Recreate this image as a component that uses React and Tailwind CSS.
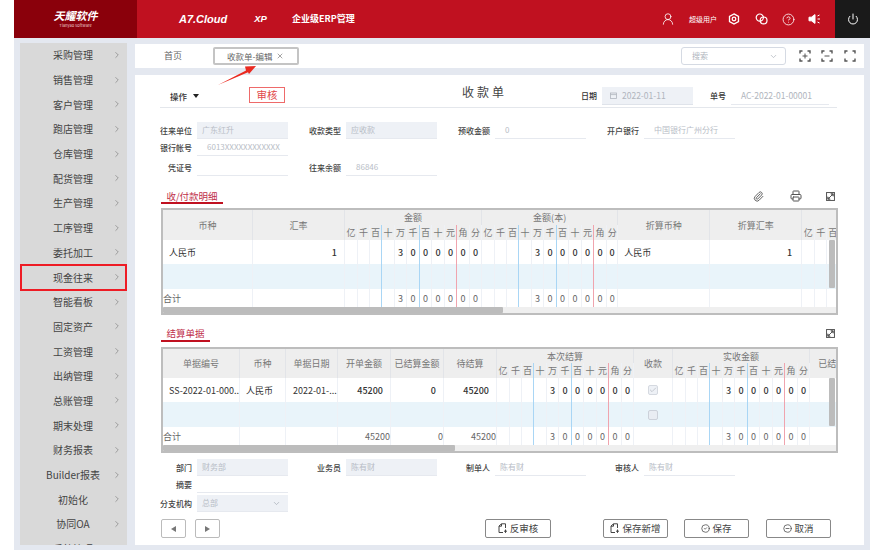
import React from "react";
import { ChevronRight, ChevronDown, X, Power, UserRound, CircleHelp, CircleCheck, CircleMinus, Paperclip, Printer, Check } from "lucide-react";

const menu = ["采购管理","销售管理","客户管理","跑店管理","仓库管理","配货管理","生产管理","工序管理","委托加工","现金往来","智能看板","固定资产","工资管理","出纳管理","总账管理","期末处理","财务报表","Builder报表","初始化","协同OA","系统管理"];

const units = ["亿","千","百","十","万","千","百","十","元","角","分"];
const widths = ["w-[13px]","w-[12px]","w-[12px]","w-[13px]","w-[12px]","w-[13px]","w-[12px]","w-[13px]","w-[12px]","w-[13px]","w-[12px]"];
const digitsValue = ["","","","","3","0","0","0","0","0","0"];

function lineClass(i) {
  if (i === 2 || i === 5) return "border-r-[#a9d6f5]";
  if (i === 8) return "border-r-[#f0a4ae]";
  return "border-r-[#eef1f6]";
}

function DigitHead({ count = 11 }) {
  return units.slice(0, count).map((u, i) => (
    <th key={i} className={`border-r font-normal text-[9px] text-[#777] bg-[#eeeeee] p-0 ${lineClass(i)}`}>{u}</th>
  ));
}

function DigitCells({ values, tone = "text-[#333] font-medium", count = 11 }) {
  return units.slice(0, count).map((_, i) => (
    <td key={i} className={`border-r text-center text-[9px] p-0 ${tone} ${lineClass(i)}`}>{values ? values[i] : ""}</td>
  ));
}

const th = "border-r border-r-[#e2e4e8] bg-[#eeeeee] font-normal text-[9px] text-[#777] p-0";
const td = "border-r border-r-[#eef1f6] text-[9px] text-[#333] p-0";

function Cols({ list }) {
  return <colgroup>{list.map((c, i) => <col key={i} className={c} />)}</colgroup>;
}

function Table1() {
  return (
    <div className="relative w-[677px] h-[107px] border-2 border-[#bdbdbd] overflow-hidden">
      <table className="table-fixed border-separate border-spacing-0 w-[776px] leading-none">
        <Cols list={["w-[90px]","w-[92px]",...widths,...widths.map((w,i)=> i===10 ? "w-[11px]" : w),"w-[92px]","w-[92px]",...widths]} />
        <thead>
          <tr className="h-[15px]">
            <th rowSpan={2} className={th}>币种</th>
            <th rowSpan={2} className={th}>汇率</th>
            <th colSpan={11} className={th}>金额</th>
            <th colSpan={11} className={th}>金额(本)</th>
            <th rowSpan={2} className={th}>折算币种</th>
            <th rowSpan={2} className={th}>折算汇率</th>
            <th colSpan={11} className={th}></th>
          </tr>
          <tr className="h-[15px]">
            <DigitHead /><DigitHead /><DigitHead />
          </tr>
        </thead>
        <tbody>
          <tr className="h-[24px]">
            <td className={`${td} pl-[6px]`}>人民币</td>
            <td className={`${td} text-right pr-[7px] font-medium`}>1</td>
            <DigitCells values={digitsValue} /><DigitCells values={digitsValue} />
            <td className={`${td} pl-[6px]`}>人民币</td>
            <td className={`${td} text-right pr-[9px] font-medium`}>1</td>
            <DigitCells />
          </tr>
          <tr className="h-[25px] bg-[#e9f4fa]">
            <td className={td}></td><td className={td}></td>
            <DigitCells /><DigitCells />
            <td className={td}></td><td className={td}></td>
            <DigitCells />
          </tr>
          <tr className="h-[18px]">
            <td className={`${td} text-[#666]`}>合计</td><td className={td}></td>
            <DigitCells values={digitsValue} tone="text-[#666]" /><DigitCells values={digitsValue} tone="text-[#666]" />
            <td className={td}></td><td className={td}></td>
            <DigitCells />
          </tr>
        </tbody>
      </table>
      <div className="absolute left-0 right-0 bottom-0 h-[6px] bg-[#efefef]">
        <div className="h-full w-[340px] bg-[#bcbcbc] rounded-[1px]" />
      </div>
      <div className="absolute right-[1px] top-[30px] w-[6px] h-[48px] bg-[#bcbcbc] rounded-[1px]" />
    </div>
  );
}

function Table2() {
  const rightNum = `${td} text-right pr-[7px] font-medium`;
  const foot = `${td} text-right text-[#666]`;
  return (
    <div className="relative w-[677px] h-[106px] border-2 border-[#bdbdbd] overflow-hidden">
      <table className="table-fixed border-separate border-spacing-0 w-[727px] leading-none">
        <Cols list={["w-[77px]","w-[46px]","w-[52px]","w-[53px]","w-[53px]","w-[53px]",...widths,"w-[39px]",...widths,"w-[80px]"]} />
        <thead>
          <tr className="h-[14px]">
            <th rowSpan={2} className={th}>单据编号</th>
            <th rowSpan={2} className={th}>币种</th>
            <th rowSpan={2} className={th}>单据日期</th>
            <th rowSpan={2} className={th}>开单金额</th>
            <th rowSpan={2} className={th}>已结算金额</th>
            <th rowSpan={2} className={th}>待结算</th>
            <th colSpan={11} className={th}>本次结算</th>
            <th rowSpan={2} className={th}>收款</th>
            <th colSpan={11} className={th}>实收金额</th>
            <th rowSpan={2} className={`${th} text-left pl-[8px]`}>已结算</th>
          </tr>
          <tr className="h-[15px]">
            <DigitHead />
            <DigitHead />
          </tr>
        </thead>
        <tbody>
          <tr className="h-[24px]">
            <td className={`${td} pl-[6px] whitespace-nowrap overflow-hidden`}>SS-2022-01-000...</td>
            <td className={`${td} pl-[6px]`}>人民币</td>
            <td className={`${td} pl-[7px] whitespace-nowrap overflow-hidden`}>2022-01-...</td>
            <td className={rightNum}>45200</td>
            <td className={rightNum}>0</td>
            <td className={rightNum}>45200</td>
            <DigitCells values={digitsValue} />
            <td className={td}>
              <span className="mx-auto flex items-center justify-center w-[10px] h-[10px] border border-[#d5d9e0] bg-[#eef1f6] rounded-[2px]">
                <Check size={8} className="text-[#b0b5bd]" />
              </span>
            </td>
            <DigitCells values={digitsValue} />
            <td className={td}></td>
          </tr>
          <tr className="h-[25px] bg-[#e9f4fa]">
            {[0,1,2,3,4,5].map((i) => <td key={i} className={td}></td>)}
            <DigitCells />
            <td className={td}>
              <span className="mx-auto block w-[10px] h-[10px] border border-[#ccd1da] bg-[#e9edf3] rounded-[2px]" />
            </td>
            <DigitCells />
            <td className={td}></td>
          </tr>
          <tr className="h-[18px]">
            <td className={`${td} text-[#666]`}>合计</td>
            <td className={td}></td><td className={td}></td>
            <td className={foot}>45200</td><td className={foot}>0</td><td className={foot}>45200</td>
            <DigitCells values={digitsValue} tone="text-[#666]" />
            <td className={td}></td>
            <DigitCells values={digitsValue} tone="text-[#666]" />
            <td className={td}></td>
          </tr>
        </tbody>
      </table>
      <div className="absolute left-0 right-0 bottom-0 h-[6px] bg-[#efefef]">
        <div className="h-full w-[292px] bg-[#bcbcbc] rounded-[1px]" />
      </div>
      <div className="absolute right-[1px] top-[29px] w-[6px] h-[48px] bg-[#bcbcbc] rounded-[1px]" />
    </div>
  );
}

function Field({ label, value, filled, wide, children }) {
  return (
    <div className="flex w-[149px] h-[17px] items-center">
      <span className="w-[32px] text-right text-[8px] font-medium text-[#444] whitespace-nowrap flex justify-end">{label}</span>
      <span className={`ml-[5px] w-[91px] h-[17px] flex items-center justify-between text-[8px] text-[#b8bdc6] border-b border-b-[#e6e9ef] whitespace-nowrap ${filled ? "bg-[#eef1f6] pl-[5px]" : wide ? "pl-[10px]" : "pl-[5px]"}`}>
        {value}{children}
      </span>
    </div>
  );
}

function ExpandIcon() {
  return (
    <svg width="9" height="9" viewBox="0 0 10 10" fill="none" stroke="#555" strokeWidth="1.1">
      <rect x="0.6" y="0.6" width="8.8" height="8.8" />
      <path d="M2.2 7.8 7.8 2.2" />
      <path d="M5.2 2h2.8v2.8M2 5.2V8h2.8" fill="#555" />
    </svg>
  );
}

function FrameIcon({ mark }) {
  return (
    <svg width="12" height="12" viewBox="0 0 12 12" fill="none" stroke="#555" strokeWidth="1.4">
      <path d="M1 3.5V1h2.5M8.5 1H11v2.5M11 8.5V11H8.5M3.5 11H1V8.5" />
      {mark === "plus" && <path d="M3.5 6h5M6 3.5v5" strokeWidth="1" />}
      {mark === "minus" && <path d="M3.5 6h5" strokeWidth="1" />}
    </svg>
  );
}

function DocPlus() {
  return (
    <svg width="10" height="11" viewBox="0 0 10 11" fill="none" stroke="#444" strokeWidth="1">
      <path d="M1 9.5V3l2.5-2.2H7.5V5" />
      <path d="M3.5 1v2.2H1" />
      <path d="M1 9.5h4M7.5 6.5v3.4M6 8.2h3" />
    </svg>
  );
}

function Btn({ icon, children, w = "w-[65px]" }) {
  return (
    <div className={`${w} h-[19px] border border-[#888] rounded-[2px] flex items-center justify-center gap-[2px] text-[9.5px] text-[#444] bg-white`}>
      {icon}{children}
    </div>
  );
}

export default function App() {
  return (
    <div className="w-[890px] h-[550px] bg-white pl-[14px] pr-[20px] overflow-hidden relative font-['Noto_Sans_CJK_SC','Noto_Sans',sans-serif]">
      <div className="h-[550px] bg-[#e4e8f0] flex flex-col">
        {/* header */}
        <header className="h-[38px] flex items-center bg-[#c01120] text-white shrink-0">
          <div className="w-[123px] h-full bg-[#8a000b] flex flex-col items-center pt-[9px]">
            <span className="text-[11px] leading-[12px] font-bold italic">天耀软件</span>
            <span className="mt-[2px] text-[4px] leading-[5px] text-[#eeccd0] whitespace-nowrap">Tianyao Software</span>
          </div>
          <span className="ml-[42px] text-[11px] font-bold italic font-['Liberation_Sans',sans-serif]">A7.Cloud</span>
          <span className="ml-[27px] text-[9.5px] font-bold italic font-['Liberation_Sans',sans-serif]">XP</span>
          <span className="ml-[25px] text-[9px] font-semibold whitespace-nowrap">企业级ERP管理</span>
          <div className="ml-auto flex items-center h-full">
            <UserRound size={14} strokeWidth={1.4} />
            <span className="ml-[14px] text-[7px] whitespace-nowrap">超级用户</span>
            <svg className="ml-[11px]" width="12" height="12" viewBox="0 0 12 12" fill="none" stroke="#fff" strokeWidth="1.3">
              <path d="M6 .9 10.5 3.4v5.2L6 11.1 1.5 8.6V3.4Z" />
              <circle cx="6" cy="6" r="1.8" />
            </svg>
            <svg className="ml-[15px]" width="13" height="12" viewBox="0 0 13 12" fill="none" stroke="#fff" strokeWidth="1.2">
              <circle cx="4.8" cy="4.6" r="3.6" />
              <circle cx="8.6" cy="7.4" r="3.4" />
            </svg>
            <CircleHelp className="ml-[14px]" size={13} strokeWidth={1.5} />
            <svg className="ml-[13px]" width="13" height="12" viewBox="0 0 13 12" fill="#fff" stroke="#fff" strokeWidth="1">
              <path d="M1 4.2h2.4L7 1.6v8.8L3.4 7.8H1Z" />
              <path d="M9.5 3 11.5 2M9.5 6H12M9.5 9l2 1" fill="none" />
            </svg>
            <div className="ml-[14px] w-[35px] h-full bg-[#1a1a1a] flex items-center justify-center">
              <Power size={12} strokeWidth={2} />
            </div>
          </div>
        </header>

        <div className="flex flex-1 min-h-0">
          {/* sidebar */}
          <aside className="ml-[6px] mt-[5px] w-[107px] h-[502px] bg-[#d9d9d9] overflow-hidden shrink-0">
            {menu.map((m, i) => (
              <div key={i} className="relative h-[24.7px] flex items-center text-[10px] text-[#444]">
                <span className="ml-[13px] w-[80px] text-center whitespace-nowrap -mt-[1px]">{m}</span>
                <ChevronRight size={10} strokeWidth={1.5} className="text-[#777] -ml-[1px] -mt-[1px]" />
                {i === 9 && <div className="absolute left-0 right-0 top-[-1.3px] bottom-[-1.3px] border-2 border-[#ee1c25]" />}
              </div>
            ))}
          </aside>

          {/* main */}
          <main className="ml-[8px] mt-[6px] w-[729px] flex flex-col">
            <div className="h-[24px] bg-white flex items-center shrink-0">
              <span className="ml-[29px] text-[9px] text-[#666]">首页</span>
              <div className="ml-[31px] w-[86px] h-[18px] border-2 border-[#c4c4c4] rounded-[2px] flex items-center pl-[12px] text-[8.5px] text-[#666] whitespace-nowrap">
                收款单-编辑
                <X size={8} className="ml-[4px] text-[#777]" />
              </div>
              <div className="ml-[382px] w-[105px] h-[18px] border border-[#d5dae3] rounded-[3px] flex items-center justify-between pl-[10px] pr-[7px] text-[8px] text-[#b0b5bd]">
                搜索
                <ChevronDown size={9} className="text-[#b0b5bd]" />
              </div>
              <span className="ml-[13px]"><FrameIcon mark="plus" /></span>
              <span className="ml-[10px]"><FrameIcon mark="minus" /></span>
              <span className="ml-[11px]"><FrameIcon /></span>
            </div>

            <div className="mt-[7px] h-[470px] bg-white pl-[25px] shrink-0 overflow-hidden">
              {/* title row */}
              <div className="w-[677px] h-[33px] pt-[12px] border-b border-b-[#e4e7ec] flex items-start">
                <span className="ml-[10px] w-[79px] h-[18px] flex items-center text-[8.5px] text-[#333] font-medium gap-[6px]">
                  操作
                  <span className="w-0 h-0 border-l-[3px] border-r-[3px] border-t-[4px] border-l-transparent border-r-transparent border-t-[#222]" />
                </span>
                <span className="w-[36px] h-[16px] border border-[#ee6a6a] text-[#e24a4a] text-[10.5px] flex items-center justify-center">审核</span>
                <span className="ml-[177px] w-[119px] h-[18px] text-[12px] tracking-[3px] text-[#444] leading-[10px]">收款单</span>
                <span className="w-[21px] h-[18px] flex items-center text-[8px] font-medium text-[#333]">日期</span>
                <span className="w-[91px] h-[18px] bg-[#eef1f6] border-b border-b-[#dfe3ea] flex items-center pl-[8px] gap-[5px] text-[8.5px] text-[#b0b5bd]">
                  <svg width="7" height="7" viewBox="0 0 7 7" fill="none" stroke="#b0b5bd" strokeWidth="0.8"><rect x="0.5" y="1" width="6" height="5.5" /><path d="M.5 2.6h6" /></svg>
                  2022-01-11
                </span>
                <span className="ml-[17px] w-[21px] h-[18px] flex items-center text-[8px] font-medium text-[#333]">单号</span>
                <span className="w-[98px] h-[18px] border-b border-b-[#e6e9ef] flex items-center pl-[10px] text-[8.5px] text-[#b0b5bd] whitespace-nowrap">AC-2022-01-00001</span>
              </div>

              {/* form */}
              <div className="mt-[14px] flex">
                <Field label="往来单位" value="广东红升" filled />
                <Field label="收款类型" value="应收款" filled />
                <Field label="预收金额" value="0" wide />
                <Field label="开户银行" value="中国银行广州分行" wide />
              </div>
              <div className="flex">
                <Field label="银行帐号" value="6013XXXXXXXXXXXX" wide />
              </div>
              <div className="mt-[3px] flex">
                <Field label="凭证号" value="" />
                <Field label="往来余额" value="86846" wide />
              </div>

              {/* section 1 */}
              <div className="mt-[14px] ml-[1px] w-[677px] h-[14px] flex items-start">
                <span className="w-[62px] h-[14px] border-b-2 border-b-[#c01120] text-center text-[9.5px] leading-[12px] text-[#c0304a] whitespace-nowrap">收/付款明细</span>
                <div className="ml-auto flex items-center pr-[3px]">
                  <Paperclip size={11} className="text-[#555] mr-[26px]" />
                  <Printer size={12} className="text-[#555] mr-[24px]" />
                  <ExpandIcon />
                </div>
              </div>
              <div className="mt-[4px] ml-[1px]"><Table1 /></div>

              {/* section 2 */}
              <div className="mt-[11px] ml-[1px] w-[677px] h-[16px] flex items-start">
                <span className="w-[49px] h-[16px] border-b-2 border-b-[#c01120] text-center text-[9.5px] leading-[14px] text-[#c0304a] whitespace-nowrap">结算单据</span>
                <div className="ml-auto flex items-center pr-[3px] pt-[3px]"><ExpandIcon /></div>
              </div>
              <div className="mt-[5px] ml-[1px]"><Table2 /></div>

              {/* lower form */}
              <div className="mt-[6px] flex">
                <Field label="部门" value="财务部" filled />
                <Field label="业务员" value="陈有财" filled />
                <Field label="制单人" value="陈有财" />
                <Field label="审核人" value="陈有财" />
              </div>
              <Field label="摘要" value="" />
              <div className="mt-[2px]">
                <Field label="分支机构" value="总部" filled>
                  <ChevronDown size={9} className="mr-[7px] text-[#aab0ba]" />
                </Field>
              </div>

              {/* buttons */}
              <div className="mt-[7px] ml-[1px] flex">
                <div className="w-[25px] h-[19px] border border-[#bbb] rounded-[2px] flex items-center justify-center">
                  <span className="w-0 h-0 border-y-[3px] border-r-[5px] border-y-transparent border-r-[#777]" />
                </div>
                <div className="ml-[9px] w-[25px] h-[19px] border border-[#bbb] rounded-[2px] flex items-center justify-center">
                  <span className="w-0 h-0 border-y-[3px] border-l-[5px] border-y-transparent border-l-[#777]" />
                </div>
                <div className="ml-[265px]"><Btn w="w-[66px]" icon={<DocPlus />}>反审核</Btn></div>
                <div className="ml-[52px]"><Btn icon={<DocPlus />}>保存新增</Btn></div>
                <div className="ml-[16px]"><Btn icon={<CircleCheck size={9} />}>保存</Btn></div>
                <div className="ml-[17px]"><Btn icon={<CircleMinus size={9} />}>取消</Btn></div>
              </div>
            </div>
          </main>
        </div>
      </div>

      {/* callout arrow */}
      <svg className="absolute left-[210px] top-[60px] pointer-events-none" width="50" height="30" viewBox="0 0 50 30" fill="#ea2a20">
        <path d="M8 25 36 10.5 35 6.5 46 6 39 14 38 12.2Z" />
      </svg>
    </div>
  );
}
